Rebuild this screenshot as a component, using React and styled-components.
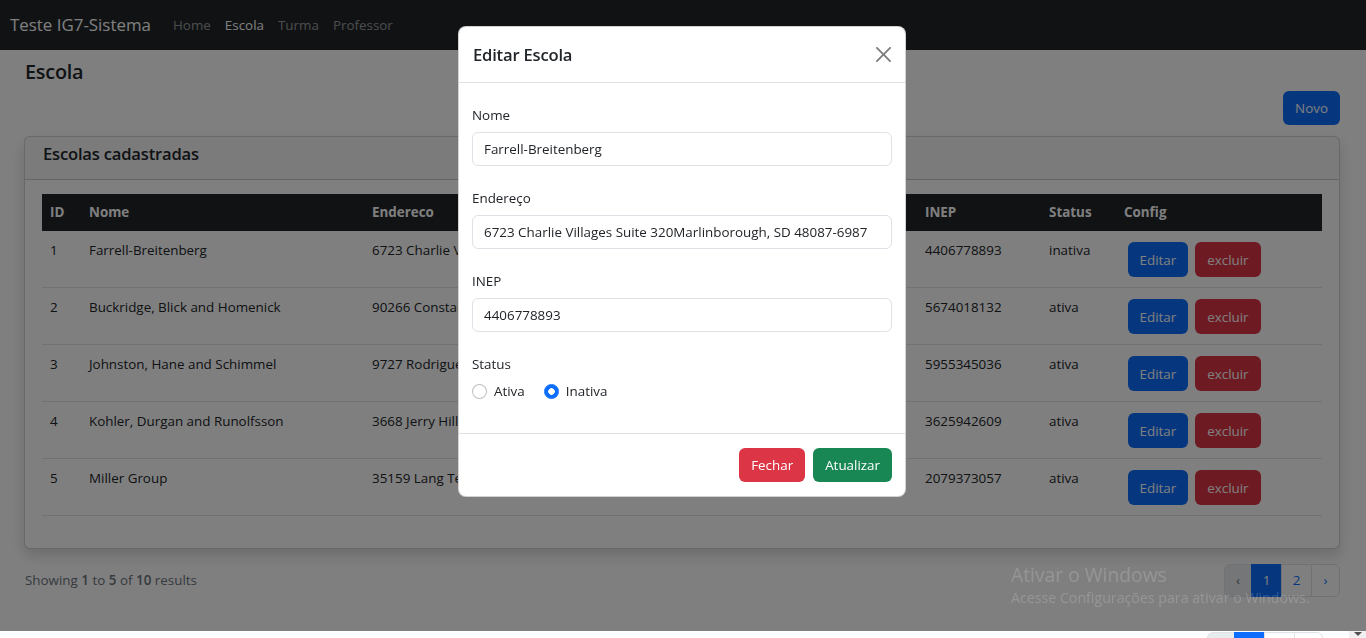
import React from 'react';
import styled, { createGlobalStyle } from 'styled-components';

const GlobalStyle = createGlobalStyle`
  * { box-sizing: border-box; }
  html, body { margin: 0; padding: 0; overflow: hidden; height: 638px; }
  body {
    font-family: "Open Sans", "Noto Sans", sans-serif;
    font-size: 13.4px;
    line-height: 21px;
    color: #212529;
    background: #fff;
  }
`;

const Navbar = styled.nav`
  height: 50px;
  background: #212529;
  display: flex;
  align-items: center;
  padding: 0 10px;
`;

const Brand = styled.a`
  width: 156px;
  font-size: 16.9px;
  line-height: 26px;
  color: #fff;
  text-decoration: none;
`;

const NavLink = styled.a`
  padding: 0 7px;
  font-size: 13.4px;
  color: ${p => (p.$active ? '#fff' : 'rgba(255,255,255,0.55)')};
  text-decoration: none;
`;

const Page = styled.main`
  padding: 0 26px 0 24px;
`;

const Title = styled.h4`
  margin: 9px 0 0 1px;
  font-size: 19.8px;
  line-height: 25px;
  font-weight: 600;
  letter-spacing: -0.2px;
`;

const ActionRow = styled.div`
  display: flex;
  justify-content: flex-end;
  margin-top: 7px;
`;

const Button = styled.button`
  height: ${p => p.$h || 34}px;
  padding: 0 12px;
  margin: ${p => p.$m || 0};
  border: 0;
  border-radius: 6px;
  font-family: inherit;
  font-size: 13.4px;
  color: #fff;
  background: ${p => p.$bg};
  cursor: pointer;
`;

const Card = styled.section`
  margin-top: 11px;
  border: 1px solid rgba(0, 0, 0, 0.175);
  border-radius: 6px;
  background: #fff;
  box-shadow: 0 7px 14px rgba(0, 0, 0, 0.15);
  overflow: hidden;
`;

const CardHeader = styled.div`
  height: 43px;
  padding: 4px 18px 0;
  background: rgba(0, 0, 0, 0.03);
  border-bottom: 1px solid rgba(0, 0, 0, 0.175);
  font-size: 16.6px;
  line-height: 26px;
  font-weight: 600;
  letter-spacing: -0.2px;
`;

const CardBody = styled.div`
  padding: 14px 17px 32px;
`;

const Table = styled.table`
  width: 100%;
  border-collapse: collapse;
  table-layout: fixed;
`;

const Th = styled.th`
  height: 37px;
  padding: 8px;
  background: #212529;
  color: #fff;
  font-weight: 700;
  text-align: left;
`;

const Td = styled.td`
  padding: 9px 8px 7px;
  vertical-align: top;
  border-bottom: 1px solid #dee2e6;
  white-space: nowrap;
  overflow: hidden;
`;

const Footer = styled.div`
  display: flex;
  justify-content: space-between;
  align-items: center;
  margin-top: 15px;
  padding-left: 1px;
`;

const Muted = styled.span`
  color: #6c757d;
  font-size: 13.4px;
`;

const Strong = styled.span`
  font-weight: 600;
`;

const Pager = styled.ul`
  display: flex;
  list-style: none;
  margin: 0;
  padding: 0;
`;

const PageItem = styled.li`
  height: 33px;
  min-width: ${p => p.$w}px;
  display: flex;
  align-items: center;
  justify-content: center;
  margin-left: -1px;
  border: 1px solid ${p => (p.$active ? '#0d6efd' : '#dee2e6')};
  background: ${p => (p.$active ? '#0d6efd' : p.$disabled ? '#e9ecef' : '#fff')};
  color: ${p => (p.$active ? '#fff' : p.$disabled ? '#6c757d' : '#0d6efd')};
  font-size: 13.4px;
  &:first-child { margin-left: 0; border-radius: 6px 0 0 6px; }
  &:last-child { border-radius: 0 6px 6px 0; }
`;

const LowerRow = styled.div`
  display: flex;
  justify-content: flex-end;
  margin-top: 35px;
  padding-right: 17px;
`;

const Backdrop = styled.div`
  position: fixed;
  top: 0;
  left: 0;
  width: 100%;
  height: 631px;
  background: rgba(0, 0, 0, 0.5);
`;

const ScrollArrow = styled.div`
  position: fixed;
  right: 0;
  top: 631px;
  width: 17px;
  height: 7px;
  background: #f0f0f0;
  display: flex;
  justify-content: center;
  padding-top: 1px;
  &::after {
    content: '';
    border-left: 4px solid transparent;
    border-right: 4px solid transparent;
    border-top: 4px solid #505050;
    height: 0;
  }
`;

const Watermark = styled.div`
  position: fixed;
  left: 1011px;
  top: 561px;
  color: rgba(255, 255, 255, 0.17);
  pointer-events: none;
`;

const WmTitle = styled.div`
  font-size: 19.3px;
  line-height: 27px;
`;

const WmText = styled.div`
  font-size: 14.2px;
  line-height: 20px;
`;

const Modal = styled.div`
  position: fixed;
  top: 26px;
  left: 458px;
  width: 448px;
  background: #fff;
  border: 1px solid rgba(0, 0, 0, 0.175);
  border-radius: 8px;
`;

const ModalHeader = styled.div`
  height: 56px;
  display: flex;
  align-items: center;
  justify-content: space-between;
  padding: 0 14px;
  border-bottom: 1px solid #dee2e6;
`;

const ModalTitle = styled.h5`
  margin: 0;
  font-size: 16.6px;
  line-height: 26px;
  font-weight: 600;
  letter-spacing: -0.2px;
`;

const CloseBtn = styled.button`
  width: 15px;
  height: 15px;
  padding: 0;
  border: 0;
  background: none;
  display: flex;
  opacity: 0.5;
`;

const ModalBody = styled.div`
  padding: 22px 13px 9px;
`;

const Group = styled.div`
  margin-bottom: 22px;
`;

const Label = styled.label`
  display: block;
  margin-bottom: 6px;
`;

const Input = styled.input`
  display: block;
  width: 100%;
  height: 34px;
  padding: 0 11px;
  border: 1px solid #dee2e6;
  border-radius: 6px;
  font-family: inherit;
  font-size: 13.4px;
  color: #212529;
  background: #fff;
  outline: none;
`;

const RadioRow = styled.div`
  display: flex;
  align-items: center;
  height: 21px;
`;

const Check = styled.label`
  display: flex;
  align-items: center;
  gap: 7px;
  margin-right: 19px;
`;

const Radio = styled.input`
  appearance: none;
  margin: 0;
  width: 15px;
  height: 15px;
  border-radius: 50%;
  border: 1px solid rgba(0, 0, 0, 0.25);
  background: #fff;
  &:checked {
    border-color: #0d6efd;
    background: radial-gradient(circle, #fff 0 3px, #0d6efd 3.5px);
  }
`;

const ModalFooter = styled.div`
  display: flex;
  justify-content: flex-end;
  gap: 8px;
  padding: 14px 13px;
  border-top: 1px solid #dee2e6;
`;

const schools = [
  { id: 1, nome: 'Farrell-Breitenberg', end: '6723 Charlie Villages Suite 320Marlinborough, SD 48087-6987', inep: '4406778893', status: 'inativa' },
  { id: 2, nome: 'Buckridge, Blick and Homenick', end: '90266 Constance Stream Apt. 512', inep: '5674018132', status: 'ativa' },
  { id: 3, nome: 'Johnston, Hane and Schimmel', end: '9727 Rodriguez Ridge Suite 118', inep: '5955345036', status: 'ativa' },
  { id: 4, nome: 'Kohler, Durgan and Runolfsson', end: '3668 Jerry Hills Apt. 803', inep: '3625942609', status: 'ativa' },
  { id: 5, nome: 'Miller Group', end: '35159 Lang Terrace', inep: '2079373057', status: 'ativa' },
];

const Pagination = () => (
  <Pager>
    <PageItem $w={28} $disabled>‹</PageItem>
    <PageItem $w={31} $active>1</PageItem>
    <PageItem $w={31}>2</PageItem>
    <PageItem $w={29}>›</PageItem>
  </Pager>
);

export default function App() {
  return (
    <>
      <GlobalStyle />
      <Navbar>
        <Brand>Teste IG7-Sistema</Brand>
        <NavLink>Home</NavLink>
        <NavLink $active>Escola</NavLink>
        <NavLink>Turma</NavLink>
        <NavLink>Professor</NavLink>
      </Navbar>
      <Page>
        <Title>Escola</Title>
        <ActionRow>
          <Button $bg="#0d6efd">Novo</Button>
        </ActionRow>
        <Card>
          <CardHeader>Escolas cadastradas</CardHeader>
          <CardBody>
            <Table>
              <colgroup>
                <col style={{ width: 39 }} />
                <col style={{ width: 283 }} />
                <col style={{ width: 553 }} />
                <col style={{ width: 124 }} />
                <col style={{ width: 75 }} />
                <col />
              </colgroup>
              <thead>
                <tr>
                  <Th>ID</Th>
                  <Th>Nome</Th>
                  <Th>Endereco</Th>
                  <Th>INEP</Th>
                  <Th>Status</Th>
                  <Th>Config</Th>
                </tr>
              </thead>
              <tbody>
                {schools.map(s => (
                  <tr key={s.id}>
                    <Td>{s.id}</Td>
                    <Td>{s.nome}</Td>
                    <Td>{s.end}</Td>
                    <Td>{s.inep}</Td>
                    <Td>{s.status}</Td>
                    <Td>
                      <Button $h={35} $m="2px 3.5px 3px" $bg="#0d6efd">Editar</Button>
                      <Button $h={35} $m="2px 3.5px 3px" $bg="#dc3545">excluir</Button>
                    </Td>
                  </tr>
                ))}
              </tbody>
            </Table>
          </CardBody>
        </Card>
        <Footer>
          <Muted>
            Showing <Strong>1</Strong> to <Strong>5</Strong> of <Strong>10</Strong> results
          </Muted>
          <Pagination />
        </Footer>
        <LowerRow>
          <Pagination />
        </LowerRow>
      </Page>

      <Backdrop />
      <ScrollArrow />
      <Watermark>
        <WmTitle>Ativar o Windows</WmTitle>
        <WmText>Acesse Configurações para ativar o Windows.</WmText>
      </Watermark>

      <Modal>
        <ModalHeader>
          <ModalTitle>Editar Escola</ModalTitle>
          <CloseBtn aria-label="Close">
            <svg width="15" height="15" viewBox="0 0 16 16">
              <path
                fill="#000"
                d="M.293.293a1 1 0 0 1 1.414 0L8 6.586 14.293.293a1 1 0 1 1 1.414 1.414L9.414 8l6.293 6.293a1 1 0 0 1-1.414 1.414L8 9.414l-6.293 6.293a1 1 0 0 1-1.414-1.414L6.586 8 .293 1.707a1 1 0 0 1 0-1.414z"
              />
            </svg>
          </CloseBtn>
        </ModalHeader>
        <ModalBody>
          <Group>
            <Label>Nome</Label>
            <Input defaultValue="Farrell-Breitenberg" />
          </Group>
          <Group>
            <Label>Endereço</Label>
            <Input defaultValue="6723 Charlie Villages Suite 320Marlinborough, SD 48087-6987" />
          </Group>
          <Group>
            <Label>INEP</Label>
            <Input defaultValue="4406778893" />
          </Group>
          <Group>
            <Label>Status</Label>
            <RadioRow>
              <Check>
                <Radio type="radio" name="status" value="ativa" />
                Ativa
              </Check>
              <Check>
                <Radio type="radio" name="status" value="inativa" defaultChecked />
                Inativa
              </Check>
            </RadioRow>
          </Group>
        </ModalBody>
        <ModalFooter>
          <Button $bg="#dc3545">Fechar</Button>
          <Button $bg="#198754">Atualizar</Button>
        </ModalFooter>
      </Modal>
    </>
  );
}
